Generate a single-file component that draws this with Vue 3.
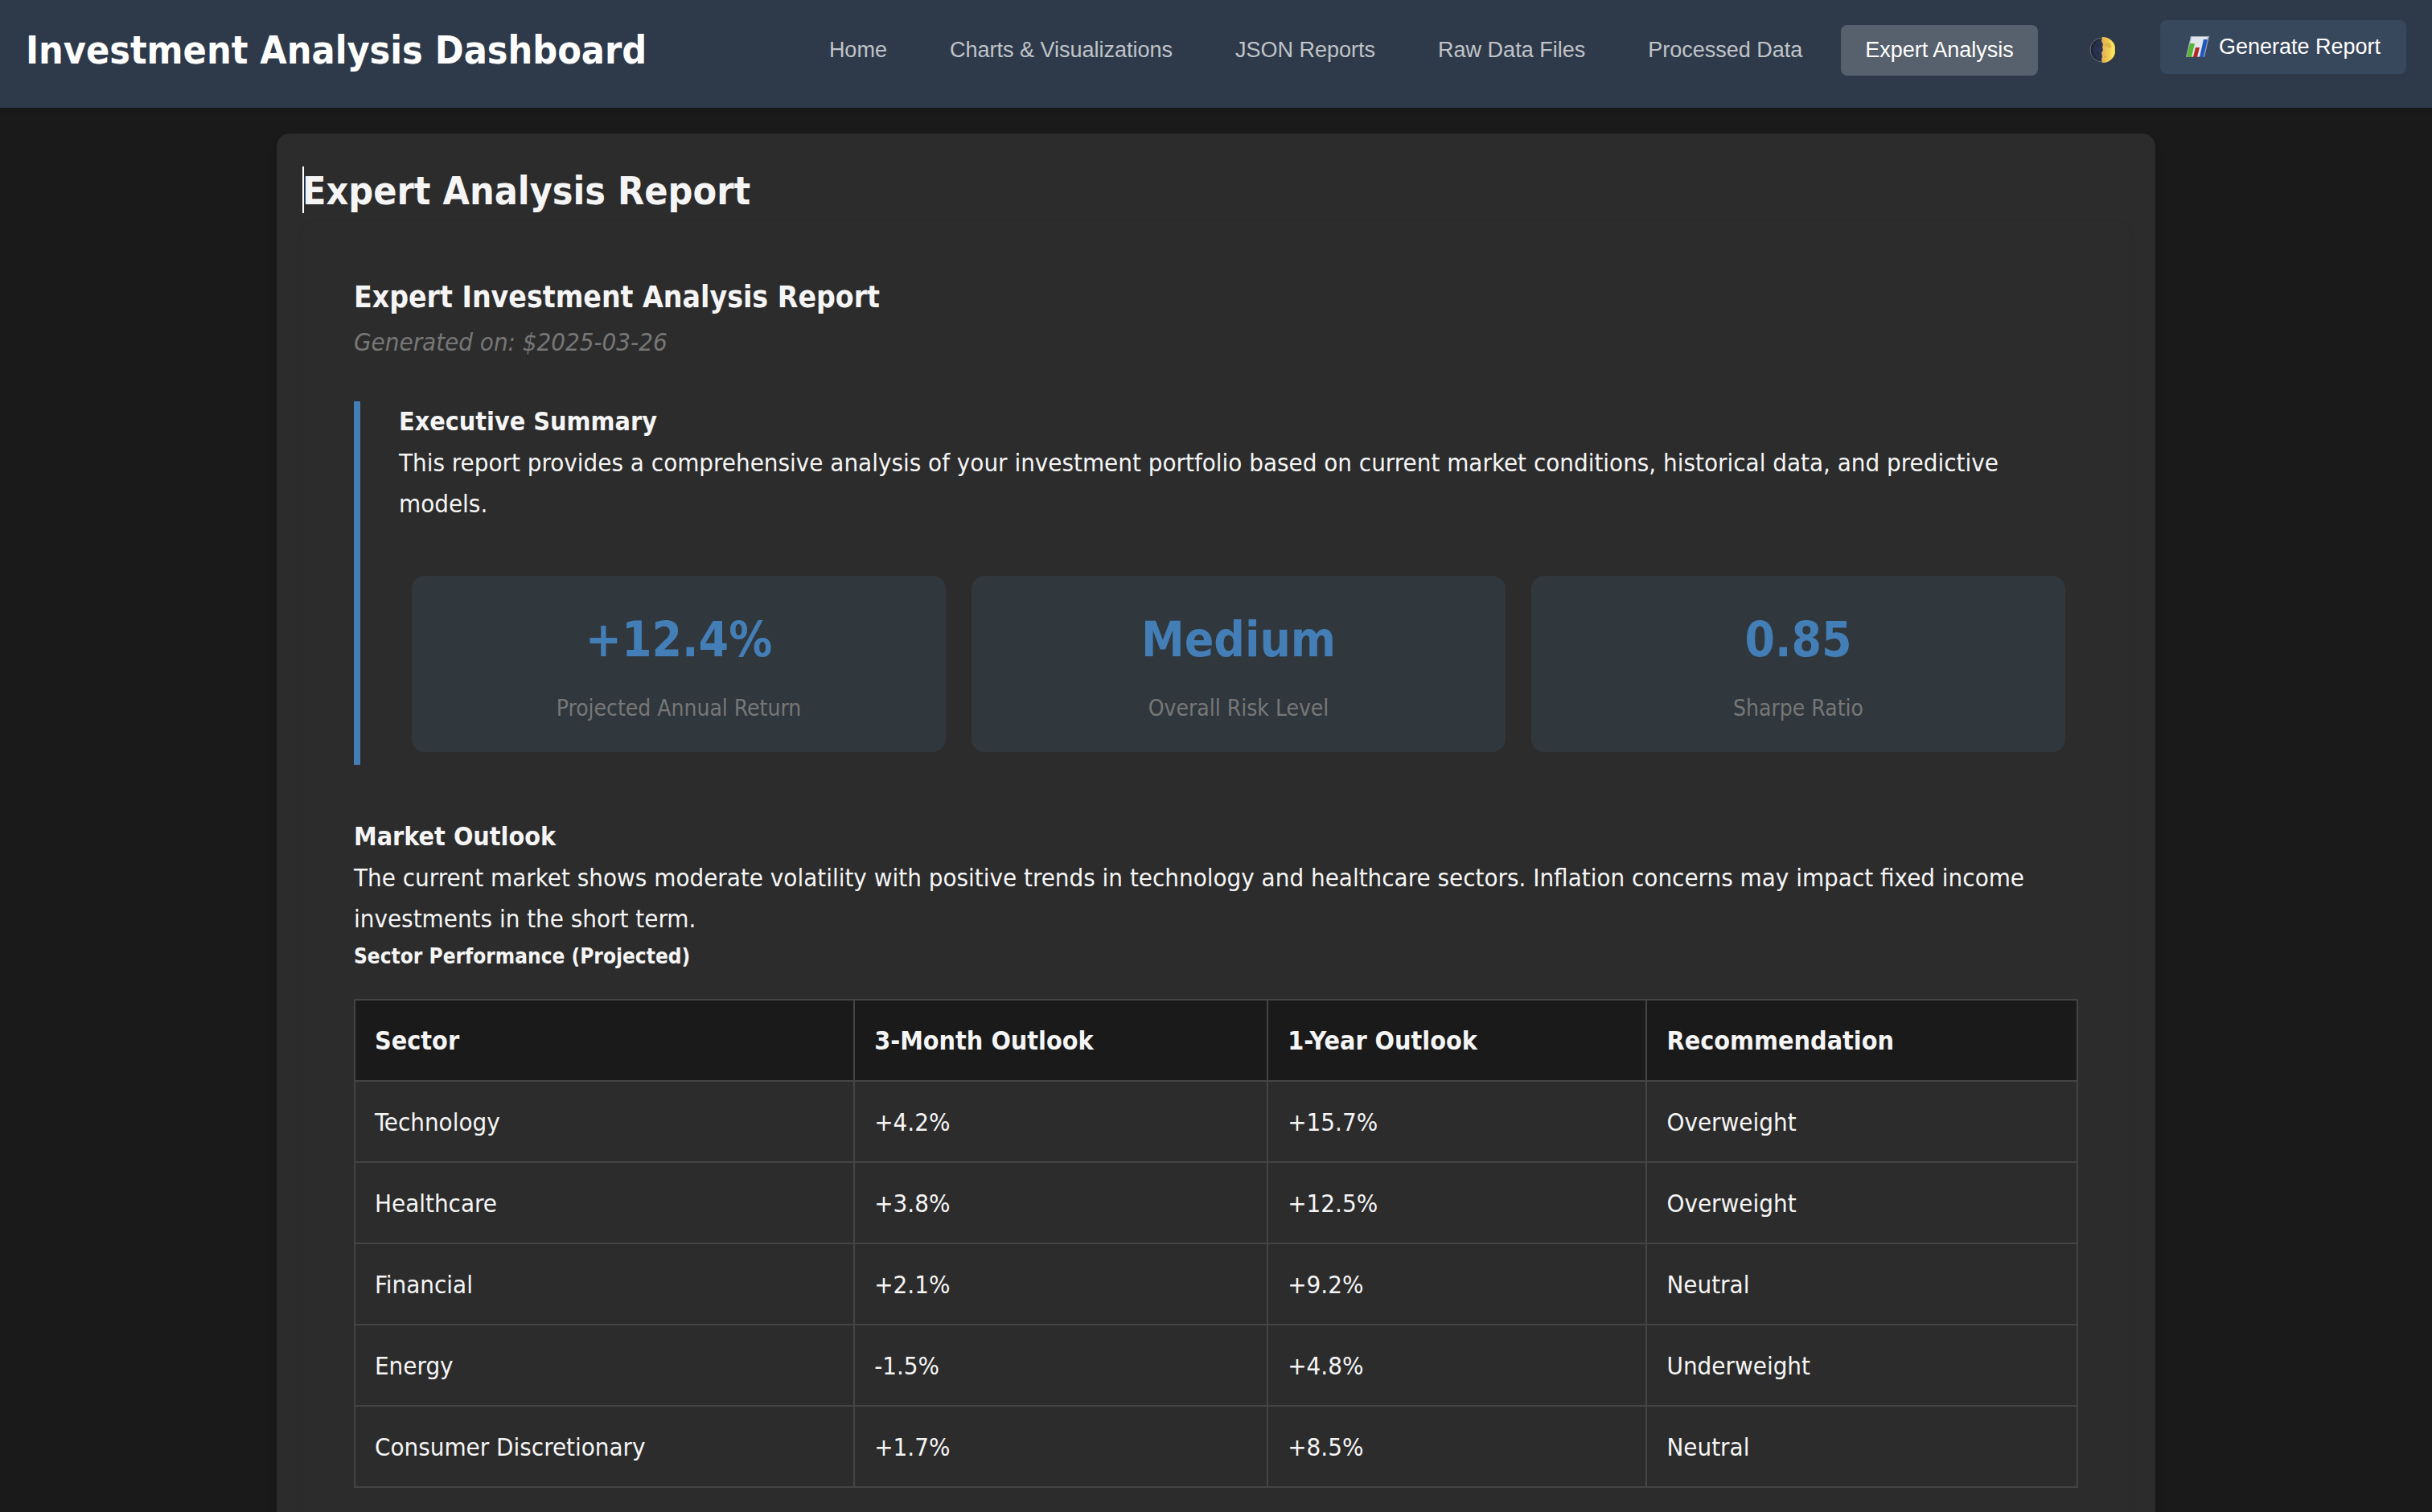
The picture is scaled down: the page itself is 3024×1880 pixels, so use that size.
<script setup>
import { ref } from 'vue'

const tabs = ['Home', 'Charts & Visualizations', 'JSON Reports', 'Raw Data Files', 'Processed Data', 'Expert Analysis']
const activeTab = ref('Expert Analysis')

const metrics = [
  { value: '+12.4%', label: 'Projected Annual Return' },
  { value: 'Medium', label: 'Overall Risk Level' },
  { value: '0.85', label: 'Sharpe Ratio' },
]

const sectors = [
  { name: 'Technology', short: '+4.2%', long: '+15.7%', advice: 'Overweight' },
  { name: 'Healthcare', short: '+3.8%', long: '+12.5%', advice: 'Overweight' },
  { name: 'Financial', short: '+2.1%', long: '+9.2%', advice: 'Neutral' },
  { name: 'Energy', short: '-1.5%', long: '+4.8%', advice: 'Underweight' },
  { name: 'Consumer Discretionary', short: '+1.7%', long: '+8.5%', advice: 'Neutral' },
]
</script>

<template>
  <div class="app">
    <header class="header">
      <h1>Investment Analysis Dashboard</h1>
      <nav class="nav">
        <button
          v-for="tab in tabs"
          :key="tab"
          type="button"
          class="tab"
          :class="{ active: tab === activeTab }"
          @click="activeTab = tab"
        >{{ tab }}</button>
      </nav>
      <div class="controls">
        <button type="button" class="theme" aria-label="Toggle theme">
          <svg viewBox="0 0 32 32" width="32" height="32" aria-hidden="true">
            <defs>
              <linearGradient id="moonLight" x1="0" x2="1" y1="0" y2="0">
                <stop offset="0" stop-color="#dfb155" />
                <stop offset="0.5" stop-color="#f0c954" />
                <stop offset="0.85" stop-color="#fdea5c" />
                <stop offset="1" stop-color="#e0c048" />
              </linearGradient>
              <radialGradient id="moonDark" cx="0.6" cy="0.5" r="0.6">
                <stop offset="0" stop-color="#2b3659" />
                <stop offset="0.7" stop-color="#28324c" />
                <stop offset="1" stop-color="#171c29" />
              </radialGradient>
            </defs>
            <circle cx="16" cy="16" r="15" fill="url(#moonDark)" stroke="#6b7278" stroke-width="1" />
            <path d="M16 0 A16 16 0 0 1 17 32 L16 32 L15 28 L16 24 L15 20 L17 16 L16 13 L17 9 L15 5Z" fill="url(#moonLight)" />
            <path d="M20 8l4-1 3 3 1 3-3 1-3-2-3 0zM18 23l3 1-1 2-2-1z" fill="#c9993f" opacity="0.45" />
            <path d="M9 9l3 1-1 3-3-1zM8 17l4 1-1 3-3-1z" fill="#1f2740" opacity="0.5" />
          </svg>
        </button>
        <button type="button" class="generate">
          <svg viewBox="0 0 29 26" width="29" height="26" aria-hidden="true">
            <path d="M6 0H29L23 26H0Z" fill="#a9b1bb" />
            <path d="M7 1H27L22 25H2Z" fill="#dfe6ee" />
            <path d="M5 9H11L7 26H1Z" fill="#56b435" />
            <path d="M12 14H17L14 26H9Z" fill="#b32622" />
            <path d="M22 4H27L22 26H17Z" fill="#2356bd" />
          </svg>
          <span>Generate Report</span>
        </button>
      </div>
    </header>

    <main class="main">
      <section class="card">
        <h2>Expert Analysis Report</h2>
        <article class="report">
          <h3>Expert Investment Analysis Report</h3>
          <p class="date">Generated on: $2025-03-26</p>

          <section class="summary">
            <h4>Executive Summary</h4>
            <p>This report provides a comprehensive analysis of your investment portfolio based on current market conditions, historical data, and predictive models.</p>
            <div class="metrics">
              <div v-for="m in metrics" :key="m.label" class="metric">
                <div class="value">{{ m.value }}</div>
                <div class="label">{{ m.label }}</div>
              </div>
            </div>
          </section>

          <section class="outlook">
            <h4>Market Outlook</h4>
            <p>The current market shows moderate volatility with positive trends in technology and healthcare sectors. Inflation concerns may impact fixed income investments in the short term.</p>
            <h5 id="sectors">Sector Performance (Projected)</h5>
            <table aria-labelledby="sectors">
              <colgroup>
                <col class="c1"><col class="c2"><col class="c3"><col class="c4">
              </colgroup>
              <thead>
                <tr>
                  <th scope="col">Sector</th>
                  <th scope="col">3-Month Outlook</th>
                  <th scope="col">1-Year Outlook</th>
                  <th scope="col">Recommendation</th>
                </tr>
              </thead>
              <tbody>
                <tr v-for="s in sectors" :key="s.name">
                  <td>{{ s.name }}</td>
                  <td>{{ s.short }}</td>
                  <td>{{ s.long }}</td>
                  <td>{{ s.advice }}</td>
                </tr>
              </tbody>
            </table>
          </section>
        </article>
      </section>
    </main>
  </div>
</template>

<style>
html,
body {
  margin: 0;
  background: #1a1a1a;
}
</style>

<style scoped>
* {
  box-sizing: border-box;
}

h1, h2, h3, h4, h5, p {
  margin: 0;
}

.app {
  color: #f5f5f5;
  font-family: "DejaVu Sans Condensed", "DejaVu Sans", sans-serif;
  font-size: 31px;
  line-height: 51px;
}

.header {
  display: flex;
  align-items: center;
  padding: 22px 32px 32px;
  background: #2e3a4a;
  box-shadow: 0 4px 8px rgba(0, 0, 0, 0.1);
}

h1 {
  color: #fff;
  font-size: 48px;
  line-height: 80px;
}

.nav {
  display: flex;
  gap: 18px;
  margin-left: auto;
}

button {
  border: 0;
  border-radius: 8px;
  background: transparent;
  font-family: "Liberation Sans", Arial, sans-serif;
  font-size: 27px;
  line-height: 31px;
  cursor: pointer;
}

.tab {
  padding: 16px 30px;
  color: #c0c4c9;
}

.tab.active {
  background: #57616d;
  color: #fff;
}

.controls {
  display: flex;
  align-items: center;
  gap: 32px;
  margin-left: 40px;
}

.theme {
  display: flex;
  padding: 16px 24px;
}

.generate {
  display: flex;
  align-items: center;
  gap: 12px;
  padding: 18px 32px;
  background: #37475c;
  color: #fff;
  transform: translateY(-4px);
}

.main {
  max-width: 2400px;
  margin: 0 auto;
  padding: 32px;
}

.card {
  padding: 32px;
  border-radius: 16px;
  background: #2c2c2c;
  box-shadow: 0 4px 8px rgba(0, 0, 0, 0.1);
}

h2 {
  position: relative;
  font-size: 48px;
  line-height: 78px;
}

/* Text cursor resting before the heading */
h2::before {
  content: "";
  position: absolute;
  top: 9px;
  left: 0;
  width: 2px;
  height: 58px;
  background: #fff;
}

.report {
  padding: 64px;
  border-radius: 16px;
  background: #2c2c2c;
  box-shadow: 0 4px 12px rgba(0, 0, 0, 0.05);
}

h3 {
  font-size: 37px;
  line-height: 60px;
}

.date {
  color: #777;
  font-style: italic;
}

h4 {
  font-size: 32px;
}

.summary {
  margin-top: 48px;
  padding: 0 0 16px 48px;
  border-left: 8px solid #447eb6;
}

.metrics {
  display: flex;
  gap: 32px;
  margin: 64px 16px 0;
}

.metric {
  flex: 1;
  padding: 32px;
  border-radius: 16px;
  background: #30373d;
  text-align: center;
}

.value {
  color: #447eb6;
  font-size: 60px;
  font-weight: 700;
  line-height: 94px;
}

.label {
  margin-top: 16px;
  color: #777;
  font-size: 28px;
  line-height: 45px;
}

.outlook {
  margin-top: 64px;
}

h5 {
  margin: 0 0 32px;
  font-size: 26px;
  line-height: 42px;
}

table {
  width: 100%;
  border-collapse: collapse;
  table-layout: fixed;
}

.c1 { width: 29%; }
.c2 { width: 24%; }
.c3 { width: 22%; }
.c4 { width: 25%; }

th,
td {
  padding: 25px 24px 23px;
  border: 2px solid #444;
  text-align: left;
}

th {
  background: #1a1a1a;
  font-size: 32px;
}
</style>
